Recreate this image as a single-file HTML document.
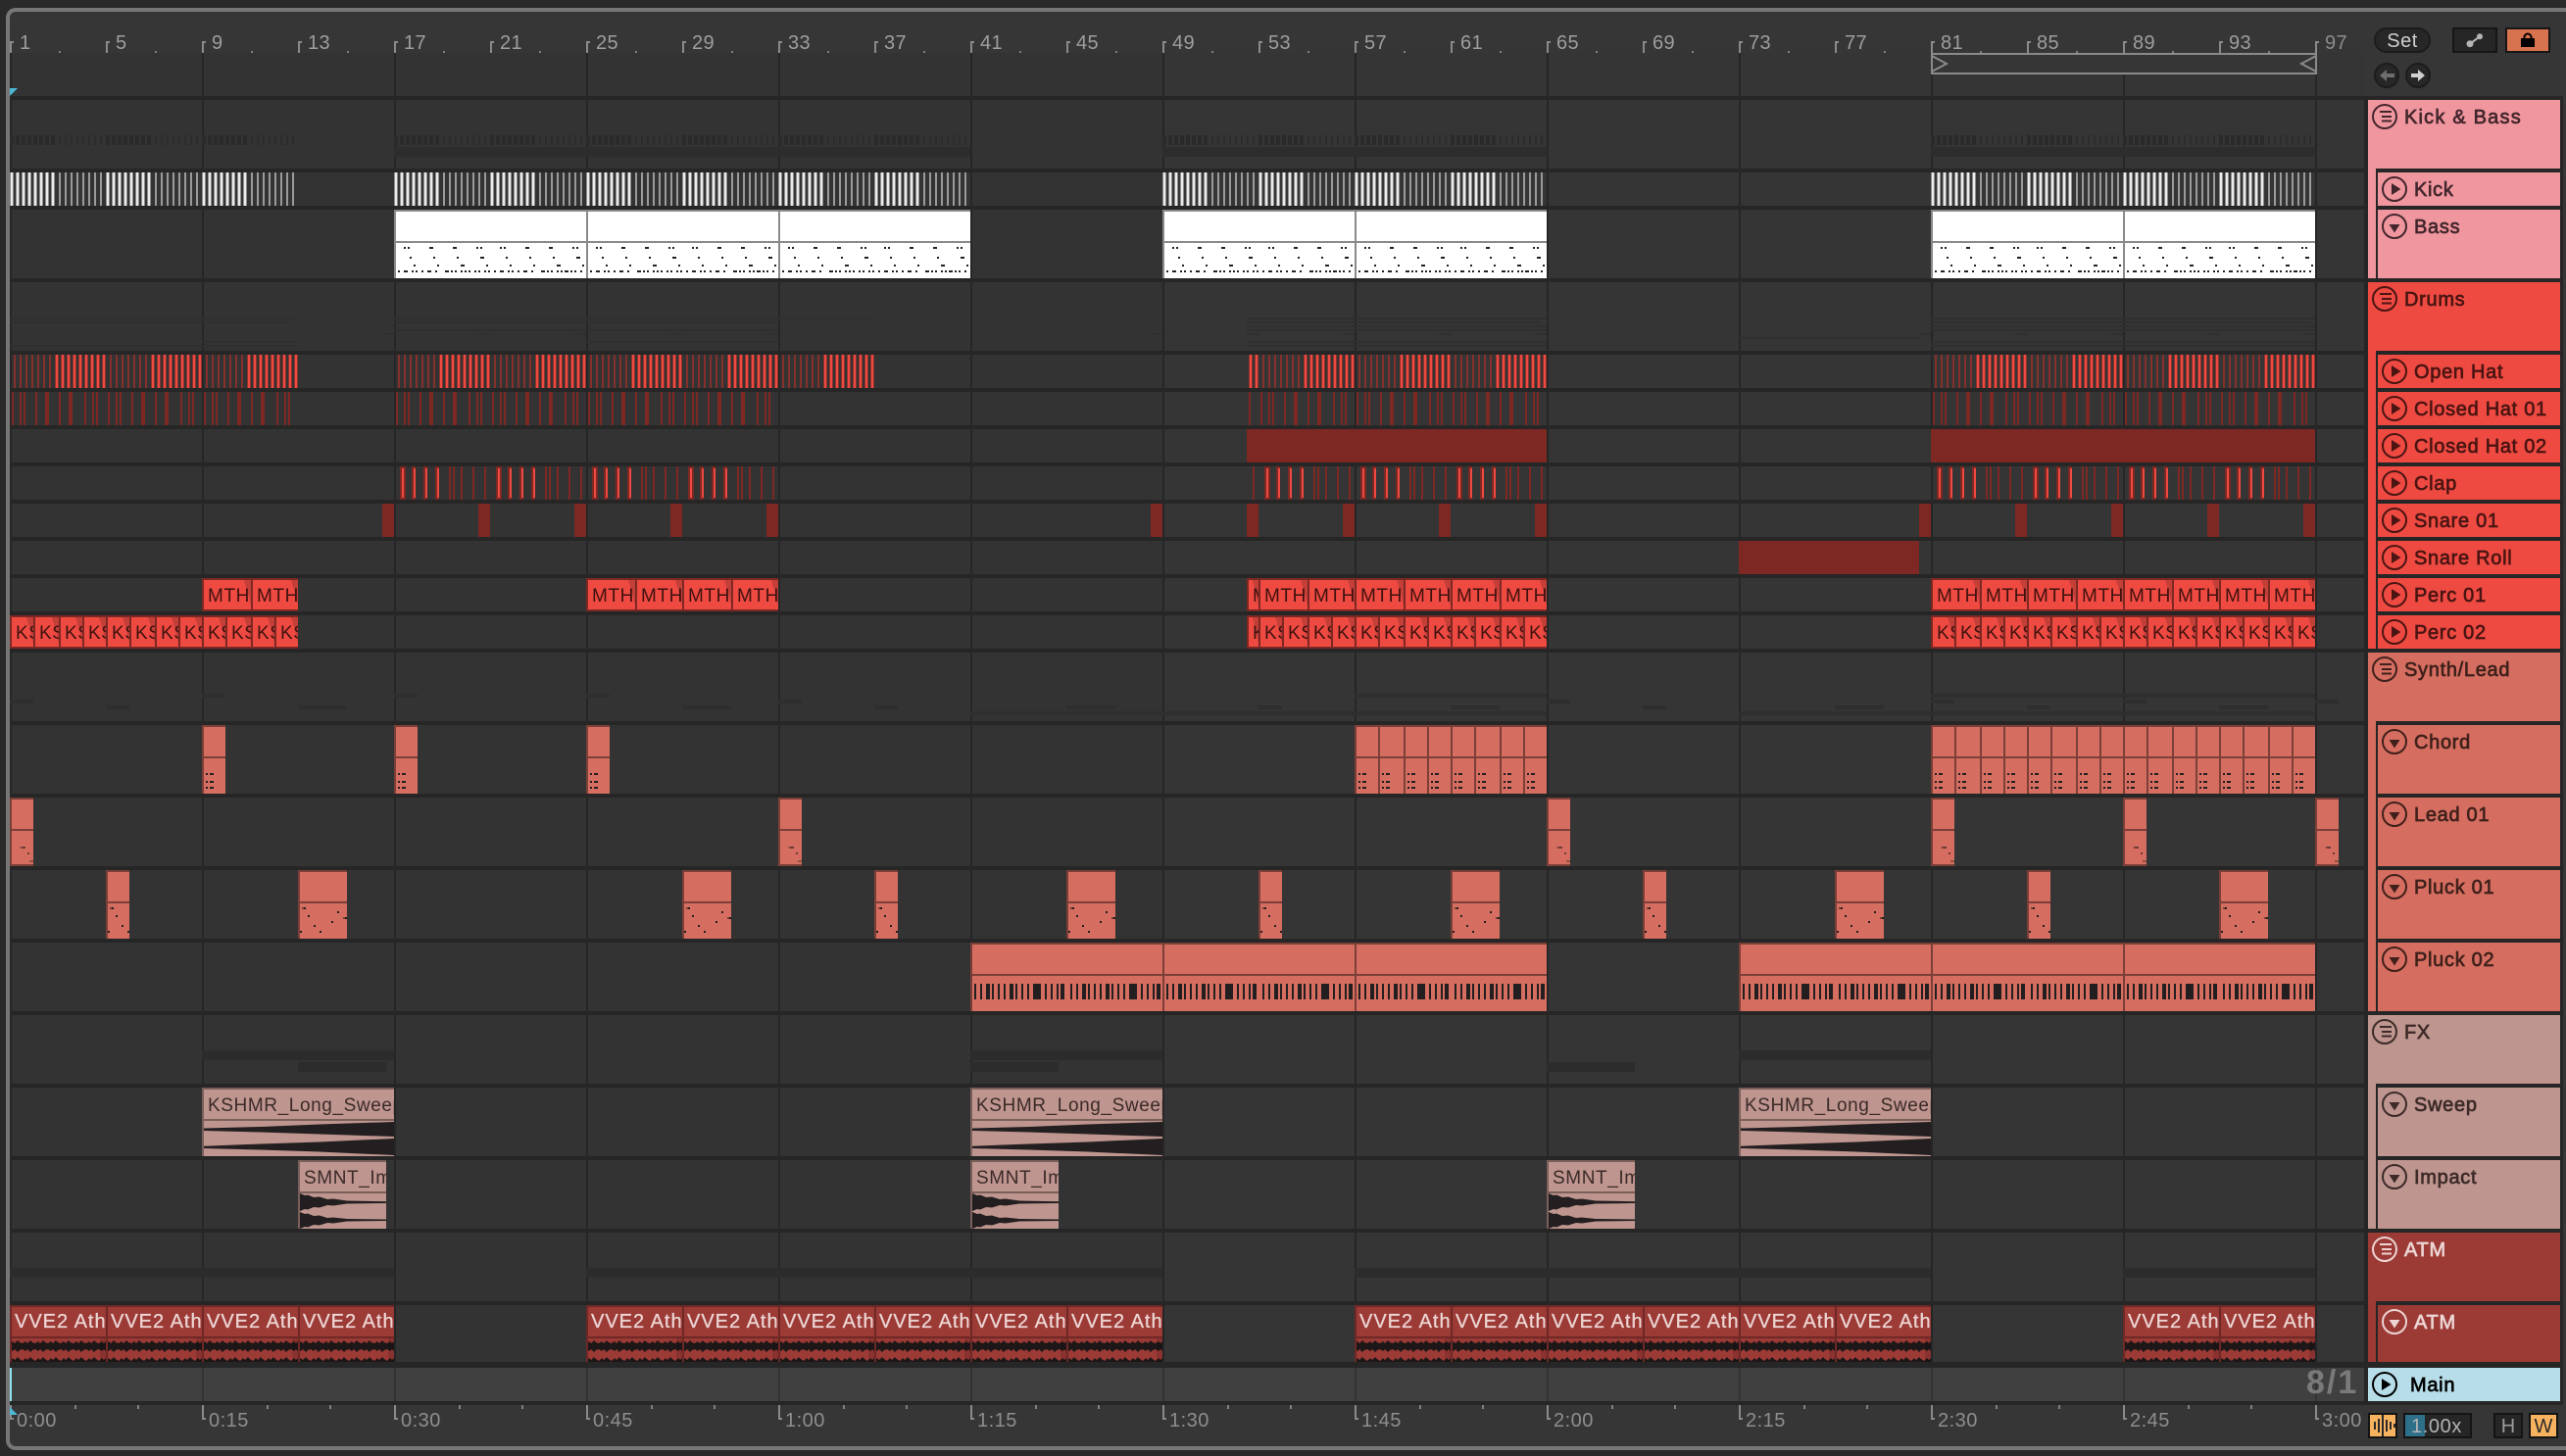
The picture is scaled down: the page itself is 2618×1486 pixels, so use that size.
<!DOCTYPE html>
<html><head><meta charset="utf-8"><title>Arrangement</title>
<style>
html,body{margin:0;padding:0;background:#2a2a2a;width:2618px;height:1486px;overflow:hidden}
svg{display:block}
text{font-family:"Liberation Sans",sans-serif}
.r{font-size:20px;fill:#9e9e9e;letter-spacing:.4px}
.t{font-size:20px;fill:#8e8e8e;letter-spacing:.5px}
.c{font-size:19px;letter-spacing:.6px}
.dk{fill:#3f110e}
.sw{fill:#3a2a28}
.at{fill:#ecd5d3;letter-spacing:1px;font-size:20px}
.at text{stroke:#ecd5d3;stroke-width:.3px}
.p text{font-size:20px;letter-spacing:.7px;stroke:currentColor;stroke-width:.7px}
</style></head><body>
<svg xmlns="http://www.w3.org/2000/svg" width="2618" height="1486" viewBox="0 0 2618 1486">
<defs>
<pattern id="kick" patternUnits="userSpaceOnUse" x="10" y="176" width="98" height="34">
<path d="M0 17h46" stroke="#8e8e8e" stroke-width="34" stroke-dasharray="4 2" fill="none"/>
<path d="M1 17h44" stroke="#ebebeb" stroke-width="34" stroke-dasharray="2 4" fill="none"/>
<path d="M50 17h44" stroke="#9a9a9a" stroke-width="34" stroke-dasharray="2 4" fill="none"/>
</pattern>
<pattern id="kickd" patternUnits="userSpaceOnUse" x="10" y="138" width="98" height="10">
<path d="M0 5h46" stroke="#2a2a2a" stroke-width="10" stroke-dasharray="4 2" fill="none"/>
<path d="M50 5h44" stroke="#2c2c2c" stroke-width="10" stroke-dasharray="2 4" fill="none"/>
</pattern>
<pattern id="oh" patternUnits="userSpaceOnUse" x="10" y="362" width="98" height="34">
<path d="M4 17h38" stroke="#86302b" stroke-width="34" stroke-dasharray="2 4" fill="none"/>
<path d="M46 17h52" stroke="#8e322c" stroke-width="34" stroke-dasharray="4 2" fill="none"/>
<path d="M47 17h50" stroke="#ee4a42" stroke-width="34" stroke-dasharray="2 4" fill="none"/>
</pattern>
<pattern id="ch" patternUnits="userSpaceOnUse" x="10" y="400" width="98" height="34">
<path d="M2 17h2M10 17h2M14 17h2M26 17h2M36 17h4M50 17h2M60 17h4M76 17h2M84 17h2M88 17h2" stroke="#7e2823" stroke-width="34" fill="none"/>
</pattern>
<pattern id="cl" patternUnits="userSpaceOnUse" x="10" y="476" width="98" height="34">
<path d="M92 17h2M6 17h6M18 17h4M30 17h4M42 17h4M56 17h2M60 17h2M68 17h2M80 17h2" stroke="#7e2823" stroke-width="34" fill="none"/>
<path d="M8 17h2M20 17h2M32 17h2M44 17h2" stroke="#ee4a42" stroke-width="30" fill="none"/>
</pattern>
<pattern id="atmw" patternUnits="userSpaceOnUse" x="0" y="36" width="13" height="22">
<path d="M0 3L3 1L5 3L8 0L10 2L13 3V9L10 10L8 12L5 9L3 11L0 9z" fill="#1e1718"/>
<path d="M0 21L3 18L5 20L8 17L10 19L13 21V22H0z" fill="#1e1718"/>
</pattern>
<pattern id="rt" patternUnits="userSpaceOnUse" x="10" y="42" width="98" height="12">
<path d="M0 0h4v2h-2v10h-2z" fill="#8a8a8a"/><path d="M50 10h2v2h-2z" fill="#808080"/>
</pattern>
<pattern id="rb" patternUnits="userSpaceOnUse" x="10" y="1434" width="196" height="16">
<path d="M0 0h2v13h2v2h-4z" fill="#8a8a8a"/><path d="M66 0h2v4h-2zM130 0h2v4h-2z" fill="#808080"/>
</pattern>

<g id="k24"><rect width="24" height="34" fill="#7e2823"/><rect x="2" y="2" width="22" height="30" fill="#ee4a42"/><path d="M17 2Q21 14 24 28V2z" fill="#c33f38"/></g>
<g id="k26"><rect width="26" height="34" fill="#7e2823"/><rect x="2" y="2" width="24" height="30" fill="#ee4a42"/><path d="M19 2Q23 14 26 28V2z" fill="#c33f38"/></g>
<g id="k12"><rect width="12" height="34" fill="#7e2823"/><rect x="2" y="2" width="10" height="30" fill="#ee4a42"/><path d="M6 2Q9 14 12 28V2z" fill="#c33f38"/></g>
<g id="m50"><rect width="50" height="34" fill="#7e2823"/><rect x="2" y="2" width="48" height="30" fill="#ee4a42"/><path d="M43 2Q47 14 50 28V2z" fill="#c33f38"/></g>
<g id="m48"><rect width="48" height="34" fill="#7e2823"/><rect x="2" y="2" width="46" height="30" fill="#ee4a42"/><path d="M41 2Q45 14 48 28V2z" fill="#c33f38"/></g>

<g id="bs"><rect width="196" height="70" fill="#8a8a8a"/><rect x="2" y="2" width="194" height="30" fill="#fff"/><rect x="2" y="34" width="194" height="36" fill="#fff"/>
<path d="M10 39h2M14 39h2M36 39h4M60 39h4M84 39h2M88 39h2M108 39h2M112 39h2M134 39h4M158 39h4M182 39h2M186 39h2M16 49h2M40 49h2M64 49h2M88 49h4M114 49h2M138 49h2M162 49h2M186 49h4M20 57h2M44 57h2M68 57h4M94 57h2M118 57h2M142 57h2M166 57h4M192 57h2M4 63h2M10 63h4M18 63h2M22 63h2M28 63h2M34 63h4M42 63h2M52 63h4M58 63h2M62 63h2M68 63h2M72 63h2M76 63h2M82 63h2M86 63h2M92 63h2M96 63h2M102 63h2M108 63h4M116 63h2M120 63h2M126 63h2M132 63h4M140 63h2M150 63h4M156 63h2M160 63h2M166 63h2M170 63h2M174 63h4M180 63h2M184 63h2M190 63h2" stroke="#222" stroke-width="2" fill="none"/></g>

<g id="sh"><rect width="26" height="70" fill="#7c3f38"/><rect x="2" y="2" width="24" height="30" fill="#d56e60"/><rect x="2" y="34" width="24" height="36" fill="#d56e60"/>
<path d="M4 50h2M8 50h4M4 58h2M8 58h4M4 64h2M8 64h4" stroke="#231f20" stroke-width="2" fill="none"/></g>
<symbol id="c24"><use href="#sh"/></symbol>
<symbol id="c26"><use href="#sh"/></symbol>
<g id="ld"><rect width="24" height="70" fill="#7c3f38"/><rect x="2" y="2" width="22" height="30" fill="#d56e60"/><rect x="2" y="34" width="22" height="34" fill="#d56e60"/>
<path d="M10 51h2" stroke="#a9574c" stroke-width="2" fill="none"/><path d="M12 51h4M18 57h2" stroke="#6b3a34" stroke-width="2" fill="none"/><path d="M20 65h4" stroke="#8e5046" stroke-width="2" fill="none"/></g>
<g id="ps"><rect width="24" height="70" fill="#7c3f38"/><rect x="2" y="2" width="22" height="30" fill="#d56e60"/><rect x="2" y="34" width="22" height="36" fill="#d56e60"/>
<path d="M6 39h2M10 47h2M16 57h2M2 63h2M22 63h2" stroke="#231f20" stroke-width="2" fill="none"/><path d="M4 39h2" stroke="#7a4038" stroke-width="2" fill="none"/></g>
<g id="pl"><rect width="50" height="70" fill="#7c3f38"/><rect x="2" y="2" width="48" height="30" fill="#d56e60"/><rect x="2" y="34" width="48" height="36" fill="#d56e60"/>
<path d="M6 39h2M10 47h2M16 57h2M2 63h2M22 63h2M40 43h2M48 49h2M34 53h2" stroke="#231f20" stroke-width="2" fill="none"/><path d="M4 39h2M46 49h2" stroke="#7a4038" stroke-width="2" fill="none"/></g>
<path id="st" d="M4 50h2M10 50h2M16 50h4M22 50h2M28 50h2M34 50h2M40 50h4M46 50h2M52 50h2M58 50h2M64 50h8M76 50h2M82 50h2M88 50h2M92 50h4" stroke="#231f20" stroke-width="16" fill="none"/>
<g id="pk"><rect width="196" height="70" fill="#7c3f38"/><rect x="2" y="2" width="194" height="30" fill="#d56e60"/><rect x="2" y="34" width="194" height="36" fill="#d56e60"/><use href="#st"/><use href="#st" x="98"/></g>

<g id="swp"><rect width="196" height="70" fill="#7a5f5b"/><rect x="2" y="2" width="194" height="30" fill="#bf958f"/><rect x="2" y="34" width="194" height="36" fill="#bf958f"/>
<path d="M2 41.500L60 40L120 37.500L196 35V50L120 47.500L60 45.500L2 44zM2 59.700L60 57.500L120 55.500L196 52V69L120 65.500L60 63.500L2 62z" fill="#231f20"/></g>
<g id="imp"><rect width="90" height="70" fill="#7a5f5b"/><rect x="2" y="2" width="88" height="30" fill="#bf958f"/><rect x="2" y="34" width="88" height="36" fill="#bf958f"/>
<path d="M2 34L7 36L10 35.500L16 38L22 37.500L30 40L36 39.500L50 41.500L90 42.200V44L50 44.500L36 46.500L30 46L22 48.500L16 48L10 50.500L7 50L2 52zM2 53L7 55L10 54.500L16 57L22 56.500L30 59L36 58.500L50 60L90 60.500V62L50 62.500L36 64.500L30 64L22 66.500L16 66L10 68.500L7 68L2 70z" fill="#231f20"/></g>
<g id="atm"><rect width="98" height="58" fill="#6e2825"/><rect x="2" y="2" width="96" height="30" fill="#9c3a36"/><rect x="2" y="34" width="96" height="24" fill="#9c3a36"/><rect x="2" y="36" width="96" height="22" fill="url(#atmw)"/><rect x="92" y="34" width="6" height="24" fill="#000" opacity=".12"/></g>

<g id="ig"><circle r="12" fill="none" stroke="currentColor" stroke-width="2"/><path d="M-5-5H7M-3 0H7M-3 4.500H7" stroke="currentColor" stroke-width="2" fill="none"/></g>
<g id="ip"><circle r="12" fill="none" stroke="currentColor" stroke-width="2"/><path d="M-3-6L6.500 0L-3 6z" fill="currentColor"/></g>
<g id="id"><circle r="12" fill="none" stroke="currentColor" stroke-width="2"/><path d="M-5.500-2H5.500L0 6.500z" fill="currentColor"/></g>
</defs>

<rect width="2618" height="1486" fill="#2a2a2a"/>
<rect x="6" y="8" width="2630" height="1472" rx="10" fill="#777"/>
<rect x="10" y="12" width="2630" height="1464" rx="6" fill="#363636"/>

<!-- track area -->
<g shape-rendering="crispEdges">
<rect x="10" y="54" width="1176" height="1376" fill="#333"/>
<rect x="1186" y="54" width="1226" height="1376" fill="#353535"/>
<path fill="#262626" d="M10 98h2402v4h-2402zM10 172h2402v4h-2402zM10 210h2402v4h-2402zM10 284h2402v4h-2402zM10 358h2402v4h-2402zM10 396h2402v4h-2402zM10 434h2402v4h-2402zM10 472h2402v4h-2402zM10 510h2402v4h-2402zM10 548h2402v4h-2402zM10 586h2402v4h-2402zM10 624h2402v4h-2402zM10 662h2402v4h-2402zM10 736h2402v4h-2402zM10 810h2402v4h-2402zM10 884h2402v4h-2402zM10 958h2402v4h-2402zM10 1032h2402v4h-2402zM10 1106h2402v4h-2402zM10 1180h2402v4h-2402zM10 1254h2402v4h-2402zM10 1328h2402v4h-2402zM10 1390h2402v6h-2402zM10 1430h2402v4h-2402z"/>
<path fill="#262626" d="M10 54h2v1342h-2zM206 54h2v1342h-2zM402 54h2v1342h-2zM598 54h2v1342h-2zM794 54h2v1342h-2zM990 54h2v1342h-2zM1186 54h2v1342h-2zM1382 54h2v1342h-2zM1578 54h2v1342h-2zM1774 54h2v1342h-2zM1970 54h2v1342h-2zM2166 54h2v1342h-2zM2362 54h2v1342h-2z"/>
<rect x="10" y="1396" width="2402" height="34" fill="#404040"/>
<path fill="#333" d="M206 1396h2v34h-2zM402 1396h2v34h-2zM598 1396h2v34h-2zM794 1396h2v34h-2zM990 1396h2v34h-2zM1186 1396h2v34h-2zM1382 1396h2v34h-2zM1578 1396h2v34h-2zM1774 1396h2v34h-2zM1970 1396h2v34h-2zM2166 1396h2v34h-2zM2362 1396h2v34h-2z"/>
<rect x="10" y="1396" width="2" height="34" fill="#8ee2f2"/>

<!-- group overviews -->
<path fill="url(#kickd)" d="M10 138h292v10h-292zM402 138h584v10h-584zM1186 138h388v10h-388zM1970 138h388v10h-388z"/>
<path fill="#2d2d2d" d="M402 150h588v10h-588zM1186 150h392v10h-392zM1970 150h392v10h-392z"/>
<path fill="#2f2f2f" d="M10 324h294v2h-294zM402 324h490v2h-490zM1272 324h306v2h-306zM1970 324h392v2h-392zM10 328h288v2h-288zM402 328h392v2h-392zM1272 328h300v2h-300zM1970 328h388v2h-388zM1272 332h306v2h-306zM1970 332h392v2h-392zM402 336h392v2h-392zM1272 336h306v2h-306zM1970 336h392v2h-392zM390 340h12v2h-12zM488 340h12v2h-12zM586 340h12v2h-12zM684 340h12v2h-12zM782 340h12v2h-12zM1174 340h12v2h-12zM1272 340h12v2h-12zM1370 340h12v2h-12zM1468 340h12v2h-12zM1566 340h12v2h-12zM1958 340h12v2h-12zM2056 340h12v2h-12zM2154 340h12v2h-12zM2252 340h12v2h-12zM2350 340h12v2h-12zM1774 344h184v2h-184zM206 348h98v2h-98zM598 348h196v2h-196zM1272 348h306v2h-306zM1970 348h392v2h-392zM10 352h294v2h-294zM1272 352h306v2h-306zM1970 352h392v2h-392z"/>
<path fill="#2e2e2e" d="M206 708h24v4h-24zM402 708h24v4h-24zM598 708h24v4h-24zM1382 708h196v4h-196zM1970 708h392v4h-392zM10 714h24v4h-24zM794 714h24v4h-24zM1578 714h24v4h-24zM1970 714h24v4h-24zM2166 714h24v4h-24zM2362 714h24v4h-24zM108 720h24v4h-24zM304 720h50v4h-50zM696 720h50v4h-50zM892 720h24v4h-24zM1088 720h50v4h-50zM1284 720h24v4h-24zM1480 720h50v4h-50zM1676 720h24v4h-24zM1872 720h50v4h-50zM2068 720h24v4h-24zM2264 720h50v4h-50zM990 726h588v4h-588zM1774 726h588v4h-588z"/>
<path fill="#2c2c2c" d="M206 1072h196v10h-196zM990 1072h196v10h-196zM1774 1072h196v10h-196zM304 1084h90v10h-90zM990 1084h90v10h-90zM1578 1084h90v10h-90zM10 1294h392v10h-392zM598 1294h588v10h-588zM1382 1294h588v10h-588zM2166 1294h196v10h-196z"/>

<!-- kick -->
<path fill="url(#kick)" d="M10 176h292v34h-292zM402 176h584v34h-584zM1186 176h388v34h-388zM1970 176h388v34h-388z"/>
<!-- bass -->
<use href="#bs" x="402" y="214"/><use href="#bs" x="598" y="214"/><use href="#bs" x="794" y="214"/>
<use href="#bs" x="1186" y="214"/><use href="#bs" x="1382" y="214"/>
<use href="#bs" x="1970" y="214"/><use href="#bs" x="2166" y="214"/>
<!-- hats etc -->
<path fill="url(#oh)" d="M10 362h294v34h-294zM402 362h490v34h-490zM1272 362h306v34h-306zM1970 362h392v34h-392z"/>
<path fill="url(#ch)" d="M10 400h288v34h-288zM402 400h392v34h-392zM1272 400h300v34h-300zM1970 400h388v34h-388z"/>
<path fill="#7e2823" d="M1272 438h306v34h-306zM1970 438h392v34h-392z"/>
<path fill="url(#cl)" d="M402 476h392v34h-392zM1272 476h306v34h-306zM1970 476h392v34h-392z"/>
<path fill="#7e2823" d="M390 514h12v34h-12zM488 514h12v34h-12zM586 514h12v34h-12zM684 514h12v34h-12zM782 514h12v34h-12zM1174 514h12v34h-12zM1272 514h12v34h-12zM1370 514h12v34h-12zM1468 514h12v34h-12zM1566 514h12v34h-12zM1958 514h12v34h-12zM2056 514h12v34h-12zM2154 514h12v34h-12zM2252 514h12v34h-12zM2350 514h12v34h-12zM1774 552h184v34h-184z"/>
</g>

<!-- Perc 01 -->
<g transform="translate(0,590)" class="c dk">
<svg x="206" width="50" height="34"><use href="#m50"/><text x="6" y="24">MTH</text></svg><svg x="256" width="48" height="34"><use href="#m48"/><text x="6" y="24">MTH</text></svg>
<svg x="598" width="50" height="34"><use href="#m50"/><text x="6" y="24">MTH</text></svg><svg x="648" width="48" height="34"><use href="#m48"/><text x="6" y="24">MTH</text></svg>
<svg x="696" width="50" height="34"><use href="#m50"/><text x="6" y="24">MTH</text></svg><svg x="746" width="48" height="34"><use href="#m48"/><text x="6" y="24">MTH</text></svg>
<svg x="1272" width="12" height="34"><use href="#k12"/><text x="6" y="24">M</text></svg>
<svg x="1284" width="50" height="34"><use href="#m50"/><text x="6" y="24">MTH</text></svg><svg x="1334" width="48" height="34"><use href="#m48"/><text x="6" y="24">MTH</text></svg>
<svg x="1382" width="50" height="34"><use href="#m50"/><text x="6" y="24">MTH</text></svg><svg x="1432" width="48" height="34"><use href="#m48"/><text x="6" y="24">MTH</text></svg>
<svg x="1480" width="50" height="34"><use href="#m50"/><text x="6" y="24">MTH</text></svg><svg x="1530" width="48" height="34"><use href="#m48"/><text x="6" y="24">MTH</text></svg>
<svg x="1970" width="50" height="34"><use href="#m50"/><text x="6" y="24">MTH</text></svg><svg x="2020" width="48" height="34"><use href="#m48"/><text x="6" y="24">MTH</text></svg>
<svg x="2068" width="50" height="34"><use href="#m50"/><text x="6" y="24">MTH</text></svg><svg x="2118" width="48" height="34"><use href="#m48"/><text x="6" y="24">MTH</text></svg>
<svg x="2166" width="50" height="34"><use href="#m50"/><text x="6" y="24">MTH</text></svg><svg x="2216" width="48" height="34"><use href="#m48"/><text x="6" y="24">MTH</text></svg>
<svg x="2264" width="50" height="34"><use href="#m50"/><text x="6" y="24">MTH</text></svg><svg x="2314" width="48" height="34"><use href="#m48"/><text x="6" y="24">MTH</text></svg>
</g>
<!-- Perc 02 -->
<g transform="translate(0,628)" class="c dk">
<svg x="10" width="24" height="34"><use href="#k24"/><text x="6" y="24">KS</text></svg><svg x="34" width="26" height="34"><use href="#k26"/><text x="6" y="24">KS</text></svg><svg x="60" width="24" height="34"><use href="#k24"/><text x="6" y="24">KS</text></svg><svg x="84" width="24" height="34"><use href="#k24"/><text x="6" y="24">KS</text></svg>
<svg x="108" width="24" height="34"><use href="#k24"/><text x="6" y="24">KS</text></svg><svg x="132" width="26" height="34"><use href="#k26"/><text x="6" y="24">KS</text></svg><svg x="158" width="24" height="34"><use href="#k24"/><text x="6" y="24">KS</text></svg><svg x="182" width="24" height="34"><use href="#k24"/><text x="6" y="24">KS</text></svg>
<svg x="206" width="24" height="34"><use href="#k24"/><text x="6" y="24">KS</text></svg><svg x="230" width="26" height="34"><use href="#k26"/><text x="6" y="24">KS</text></svg><svg x="256" width="24" height="34"><use href="#k24"/><text x="6" y="24">KS</text></svg><svg x="280" width="24" height="34"><use href="#k24"/><text x="6" y="24">KS</text></svg>
<svg x="1272" width="12" height="34"><use href="#k12"/><text x="6" y="24">K</text></svg>
<svg x="1284" width="24" height="34"><use href="#k24"/><text x="6" y="24">KS</text></svg><svg x="1308" width="26" height="34"><use href="#k26"/><text x="6" y="24">KS</text></svg><svg x="1334" width="24" height="34"><use href="#k24"/><text x="6" y="24">KS</text></svg><svg x="1358" width="24" height="34"><use href="#k24"/><text x="6" y="24">KS</text></svg>
<svg x="1382" width="24" height="34"><use href="#k24"/><text x="6" y="24">KS</text></svg><svg x="1406" width="26" height="34"><use href="#k26"/><text x="6" y="24">KS</text></svg><svg x="1432" width="24" height="34"><use href="#k24"/><text x="6" y="24">KS</text></svg><svg x="1456" width="24" height="34"><use href="#k24"/><text x="6" y="24">KS</text></svg>
<svg x="1480" width="24" height="34"><use href="#k24"/><text x="6" y="24">KS</text></svg><svg x="1504" width="26" height="34"><use href="#k26"/><text x="6" y="24">KS</text></svg><svg x="1530" width="24" height="34"><use href="#k24"/><text x="6" y="24">KS</text></svg><svg x="1554" width="24" height="34"><use href="#k24"/><text x="6" y="24">KS</text></svg>
<svg x="1970" width="24" height="34"><use href="#k24"/><text x="6" y="24">KS</text></svg><svg x="1994" width="26" height="34"><use href="#k26"/><text x="6" y="24">KS</text></svg><svg x="2020" width="24" height="34"><use href="#k24"/><text x="6" y="24">KS</text></svg><svg x="2044" width="24" height="34"><use href="#k24"/><text x="6" y="24">KS</text></svg>
<svg x="2068" width="24" height="34"><use href="#k24"/><text x="6" y="24">KS</text></svg><svg x="2092" width="26" height="34"><use href="#k26"/><text x="6" y="24">KS</text></svg><svg x="2118" width="24" height="34"><use href="#k24"/><text x="6" y="24">KS</text></svg><svg x="2142" width="24" height="34"><use href="#k24"/><text x="6" y="24">KS</text></svg>
<svg x="2166" width="24" height="34"><use href="#k24"/><text x="6" y="24">KS</text></svg><svg x="2190" width="26" height="34"><use href="#k26"/><text x="6" y="24">KS</text></svg><svg x="2216" width="24" height="34"><use href="#k24"/><text x="6" y="24">KS</text></svg><svg x="2240" width="24" height="34"><use href="#k24"/><text x="6" y="24">KS</text></svg>
<svg x="2264" width="24" height="34"><use href="#k24"/><text x="6" y="24">KS</text></svg><svg x="2288" width="26" height="34"><use href="#k26"/><text x="6" y="24">KS</text></svg><svg x="2314" width="24" height="34"><use href="#k24"/><text x="6" y="24">KS</text></svg><svg x="2338" width="24" height="34"><use href="#k24"/><text x="6" y="24">KS</text></svg>
</g>

<!-- Chord -->
<g shape-rendering="crispEdges">
<g transform="translate(0,740)">
<use href="#c24" x="206" width="24" height="70"/><use href="#c24" x="402" width="24" height="70"/><use href="#c24" x="598" width="24" height="70"/>
<use href="#c24" x="1382" width="24" height="70"/><use href="#c26" x="1406" width="26" height="70"/><use href="#c24" x="1432" width="24" height="70"/><use href="#c24" x="1456" width="24" height="70"/>
<use href="#c24" x="1480" width="24" height="70"/><use href="#c26" x="1504" width="26" height="70"/><use href="#c24" x="1530" width="24" height="70"/><use href="#c24" x="1554" width="24" height="70"/>
<use href="#c24" x="1970" width="24" height="70"/><use href="#c26" x="1994" width="26" height="70"/><use href="#c24" x="2020" width="24" height="70"/><use href="#c24" x="2044" width="24" height="70"/>
<use href="#c24" x="2068" width="24" height="70"/><use href="#c26" x="2092" width="26" height="70"/><use href="#c24" x="2118" width="24" height="70"/><use href="#c24" x="2142" width="24" height="70"/>
<use href="#c24" x="2166" width="24" height="70"/><use href="#c26" x="2190" width="26" height="70"/><use href="#c24" x="2216" width="24" height="70"/><use href="#c24" x="2240" width="24" height="70"/>
<use href="#c24" x="2264" width="24" height="70"/><use href="#c26" x="2288" width="26" height="70"/><use href="#c24" x="2314" width="24" height="70"/><use href="#c24" x="2338" width="24" height="70"/>
</g>
<!-- Lead -->
<g transform="translate(0,814)">
<use href="#ld" x="10"/><use href="#ld" x="794"/><use href="#ld" x="1578"/><use href="#ld" x="1970"/><use href="#ld" x="2166"/><use href="#ld" x="2362"/>
</g>
<!-- Pluck 01 -->
<g transform="translate(0,888)">
<use href="#ps" x="108"/><use href="#pl" x="304"/><use href="#pl" x="696"/><use href="#ps" x="892"/><use href="#pl" x="1088"/><use href="#ps" x="1284"/><use href="#pl" x="1480"/><use href="#ps" x="1676"/><use href="#pl" x="1872"/><use href="#ps" x="2068"/><use href="#pl" x="2264"/>
</g>
<!-- Pluck 02 -->
<g transform="translate(0,962)">
<use href="#pk" x="990"/><use href="#pk" x="1186"/><use href="#pk" x="1382"/><use href="#pk" x="1774"/><use href="#pk" x="1970"/><use href="#pk" x="2166"/>
</g>
</g>

<!-- Sweep -->
<g transform="translate(0,1110)" class="c sw">
<svg x="206" width="196" height="70"><use href="#swp"/><text x="6" y="24">KSHMR_Long_Sweep</text></svg>
<svg x="990" width="196" height="70"><use href="#swp"/><text x="6" y="24">KSHMR_Long_Sweep</text></svg>
<svg x="1774" width="196" height="70"><use href="#swp"/><text x="6" y="24">KSHMR_Long_Sweep</text></svg>
</g>
<!-- Impact -->
<g transform="translate(0,1184)" class="c sw">
<svg x="304" width="90" height="70"><use href="#imp"/><text x="6" y="24">SMNT_Impact</text></svg>
<svg x="990" width="90" height="70"><use href="#imp"/><text x="6" y="24">SMNT_Impact</text></svg>
<svg x="1578" width="90" height="70"><use href="#imp"/><text x="6" y="24">SMNT_Impact</text></svg>
</g>
<!-- ATM -->
<g transform="translate(0,1332)" class="c at">
<svg x="10" width="98" height="58"><use href="#atm"/><text x="5" y="23">VVE2 Athe</text></svg><svg x="108" width="98" height="58"><use href="#atm"/><text x="5" y="23">VVE2 Athe</text></svg><svg x="206" width="98" height="58"><use href="#atm"/><text x="5" y="23">VVE2 Athe</text></svg><svg x="304" width="98" height="58"><use href="#atm"/><text x="5" y="23">VVE2 Athe</text></svg>
<svg x="598" width="98" height="58"><use href="#atm"/><text x="5" y="23">VVE2 Athe</text></svg><svg x="696" width="98" height="58"><use href="#atm"/><text x="5" y="23">VVE2 Athe</text></svg><svg x="794" width="98" height="58"><use href="#atm"/><text x="5" y="23">VVE2 Athe</text></svg><svg x="892" width="98" height="58"><use href="#atm"/><text x="5" y="23">VVE2 Athe</text></svg><svg x="990" width="98" height="58"><use href="#atm"/><text x="5" y="23">VVE2 Athe</text></svg><svg x="1088" width="98" height="58"><use href="#atm"/><text x="5" y="23">VVE2 Athe</text></svg>
<svg x="1382" width="98" height="58"><use href="#atm"/><text x="5" y="23">VVE2 Athe</text></svg><svg x="1480" width="98" height="58"><use href="#atm"/><text x="5" y="23">VVE2 Athe</text></svg><svg x="1578" width="98" height="58"><use href="#atm"/><text x="5" y="23">VVE2 Athe</text></svg><svg x="1676" width="98" height="58"><use href="#atm"/><text x="5" y="23">VVE2 Athe</text></svg><svg x="1774" width="98" height="58"><use href="#atm"/><text x="5" y="23">VVE2 Athe</text></svg><svg x="1872" width="98" height="58"><use href="#atm"/><text x="5" y="23">VVE2 Athe</text></svg>
<svg x="2166" width="98" height="58"><use href="#atm"/><text x="5" y="23">VVE2 Athe</text></svg><svg x="2264" width="98" height="58"><use href="#atm"/><text x="5" y="23">VVE2 Athe</text></svg>
</g>

<!-- top ruler -->
<rect x="10" y="42" width="2356" height="12" fill="url(#rt)" shape-rendering="crispEdges"/>
<g class="r">
<text x="20" y="50">1</text><text x="118" y="50">5</text><text x="216" y="50">9</text><text x="314" y="50">13</text><text x="412" y="50">17</text><text x="510" y="50">21</text><text x="608" y="50">25</text><text x="706" y="50">29</text><text x="804" y="50">33</text><text x="902" y="50">37</text><text x="1000" y="50">41</text><text x="1098" y="50">45</text><text x="1196" y="50">49</text><text x="1294" y="50">53</text><text x="1392" y="50">57</text><text x="1490" y="50">61</text><text x="1588" y="50">65</text><text x="1686" y="50">69</text><text x="1784" y="50">73</text><text x="1882" y="50">77</text><text x="1980" y="50">81</text><text x="2078" y="50">85</text><text x="2176" y="50">89</text><text x="2274" y="50">93</text><text x="2372" y="50" style="fill:#8c8c8c">97</text>
</g>
<!-- loop brace -->
<rect x="1971" y="55" width="392" height="20" fill="#363636"/>
<path d="M1971 55H2363V75H1971zM1971 57L1986 65L1971 73M2363 57L2348 65L2363 73" fill="none" stroke="#8a8a8a" stroke-width="2"/>
<!-- markers -->
<path d="M10 90H18L10 98z" fill="#4cb8d4"/>

<!-- bottom ruler -->
<rect x="10" y="1434" width="2356" height="16" fill="url(#rb)" shape-rendering="crispEdges"/>
<path d="M10 1436L18 1444H10z" fill="#4cb8d4"/>
<g class="t">
<text x="17" y="1456">0:00</text><text x="213" y="1456">0:15</text><text x="409" y="1456">0:30</text><text x="605" y="1456">0:45</text><text x="801" y="1456">1:00</text><text x="997" y="1456">1:15</text><text x="1193" y="1456">1:30</text><text x="1389" y="1456">1:45</text><text x="1585" y="1456">2:00</text><text x="1781" y="1456">2:15</text><text x="1977" y="1456">2:30</text><text x="2173" y="1456">2:45</text><text x="2369" y="1456">3:00</text>
</g>
<text x="2353" y="1422" style="font-size:34px;font-weight:bold;fill:#7a7a7a;letter-spacing:2px">8/1</text>

<!-- track panel -->
<g shape-rendering="crispEdges">
<rect x="2412" y="98" width="203" height="1336" fill="#262626"/>
<path fill="#f0969f" d="M2416 102h196v70h-196zM2416 172h8v112h-8zM2426 176h186v34h-186zM2426 214h186v70h-186z"/>
<path fill="#ee4a42" d="M2416 288h196v70h-196zM2416 358h8v304h-8zM2426 362h186v34h-186zM2426 400h186v34h-186zM2426 438h186v34h-186zM2426 476h186v34h-186zM2426 514h186v34h-186zM2426 552h186v34h-186zM2426 590h186v34h-186zM2426 628h186v34h-186z"/>
<path fill="#d56e60" d="M2416 666h196v70h-196zM2416 736h8v296h-8zM2426 740h186v70h-186zM2426 814h186v70h-186zM2426 888h186v70h-186zM2426 962h186v70h-186z"/>
<path fill="#bf958f" d="M2416 1036h196v70h-196zM2416 1106h8v148h-8zM2426 1110h186v70h-186zM2426 1184h186v70h-186z"/>
<path fill="#9c3a36" d="M2416 1258h196v70h-196zM2416 1328h8v62h-8zM2426 1332h186v58h-186z"/>
<rect x="2416" y="1396" width="196" height="34" fill="#b7dde8"/>
</g>

<g class="p" style="color:#43262c;fill:#43262c">
<use href="#ig" x="2433" y="119"/><text x="2453" y="126" style="letter-spacing:1.200px">Kick &amp; Bass</text>
<use href="#ip" x="2443" y="193"/><text x="2463" y="200">Kick</text>
<use href="#id" x="2443" y="231"/><text x="2463" y="238">Bass</text>
</g>
<g class="p" style="color:#4a1512;fill:#4a1512">
<use href="#ig" x="2433" y="305"/><text x="2453" y="312">Drums</text>
<use href="#ip" x="2443" y="379"/><text x="2463" y="386">Open Hat</text>
<use href="#ip" x="2443" y="417"/><text x="2463" y="424">Closed Hat 01</text>
<use href="#ip" x="2443" y="455"/><text x="2463" y="462">Closed Hat 02</text>
<use href="#ip" x="2443" y="493"/><text x="2463" y="500">Clap</text>
<use href="#ip" x="2443" y="531"/><text x="2463" y="538">Snare 01</text>
<use href="#ip" x="2443" y="569"/><text x="2463" y="576">Snare Roll</text>
<use href="#ip" x="2443" y="607"/><text x="2463" y="614">Perc 01</text>
<use href="#ip" x="2443" y="645"/><text x="2463" y="652">Perc 02</text>
</g>
<g class="p" style="color:#40201b;fill:#40201b">
<use href="#ig" x="2433" y="683"/><text x="2453" y="690">Synth/Lead</text>
<use href="#id" x="2443" y="757"/><text x="2463" y="764">Chord</text>
<use href="#id" x="2443" y="831"/><text x="2463" y="838">Lead 01</text>
<use href="#id" x="2443" y="905"/><text x="2463" y="912">Pluck 01</text>
<use href="#id" x="2443" y="979"/><text x="2463" y="986">Pluck 02</text>
</g>
<g class="p" style="color:#3c2b29;fill:#3c2b29">
<use href="#ig" x="2433" y="1053"/><text x="2453" y="1060">FX</text>
<use href="#id" x="2443" y="1127"/><text x="2463" y="1134">Sweep</text>
<use href="#id" x="2443" y="1201"/><text x="2463" y="1208">Impact</text>
</g>
<g class="p" style="color:#ecd5d3;fill:#ecd5d3">
<use href="#ig" x="2433" y="1275"/><text x="2453" y="1282">ATM</text>
<use href="#id" x="2443" y="1349"/><text x="2463" y="1356">ATM</text>
</g>
<g class="p" style="color:#000;fill:#000">
<use href="#ip" x="2433" y="1413"/><text x="2459" y="1420">Main</text>
</g>

<!-- top-right controls -->
<rect x="2423" y="29" width="56" height="24" rx="12" fill="#272727" stroke="#1c1c1c" stroke-width="2"/>
<text x="2451" y="48" text-anchor="middle" style="font-size:20px;fill:#cfcfcf;letter-spacing:.5px">Set</text>
<rect x="2503" y="29" width="44" height="24" fill="#262626" stroke="#161616" stroke-width="2"/>
<path d="M2520 44.700L2530 37.300" stroke="#b5b5b5" stroke-width="2"/><circle cx="2520" cy="44.700" r="3.500" fill="#b5b5b5"/><circle cx="2530" cy="37.300" r="3" fill="#b5b5b5"/>
<rect x="2557" y="29" width="44" height="24" fill="#d8734f" stroke="#161616" stroke-width="2"/>
<rect x="2572" y="39" width="14" height="9" fill="#000"/><path d="M2575.500 39.500V38a3.500 3.500 0 0 1 7 0V39.500" fill="none" stroke="#000" stroke-width="2"/>
<circle cx="2435" cy="77" r="12" fill="#272727" stroke="#1c1c1c" stroke-width="2"/>
<path d="M2428 77l7-6v4h8v4h-8v4z" fill="#6e6e6e"/>
<circle cx="2467" cy="77" r="12" fill="#272727" stroke="#1c1c1c" stroke-width="2"/>
<path d="M2474 77l-7-6v4h-7v4h7v4z" fill="#d0d0d0"/>

<!-- bottom-right controls -->
<g shape-rendering="crispEdges">
<rect x="2417" y="1443" width="28" height="24" fill="#f7b25f" stroke="#141414" stroke-width="2"/>
<path d="M2423 1451v8M2427 1448v14M2431 1444v22M2435 1449v12M2439 1451v8M2443 1453v4" stroke="#2a2a2a" stroke-width="2" fill="none"/>
<rect x="2453" y="1443" width="68" height="24" fill="#262626" stroke="#141414" stroke-width="2"/>
<rect x="2454" y="1444" width="20" height="22" fill="#2e6f8a"/>
<rect x="2545" y="1443" width="28" height="24" fill="#262626" stroke="#141414" stroke-width="2"/>
<rect x="2581" y="1443" width="28" height="24" fill="#f7b25f" stroke="#141414" stroke-width="2"/>
</g>
<text x="2460" y="1462" style="font-size:20px;fill:#b4b4b4;letter-spacing:.6px">1.00x</text>
<text x="2559" y="1462" text-anchor="middle" style="font-size:20px;fill:#9c9c9c">H</text>
<text x="2595" y="1462" text-anchor="middle" style="font-size:20px;fill:#2a2a2a">W</text>
</svg>
</body></html>
